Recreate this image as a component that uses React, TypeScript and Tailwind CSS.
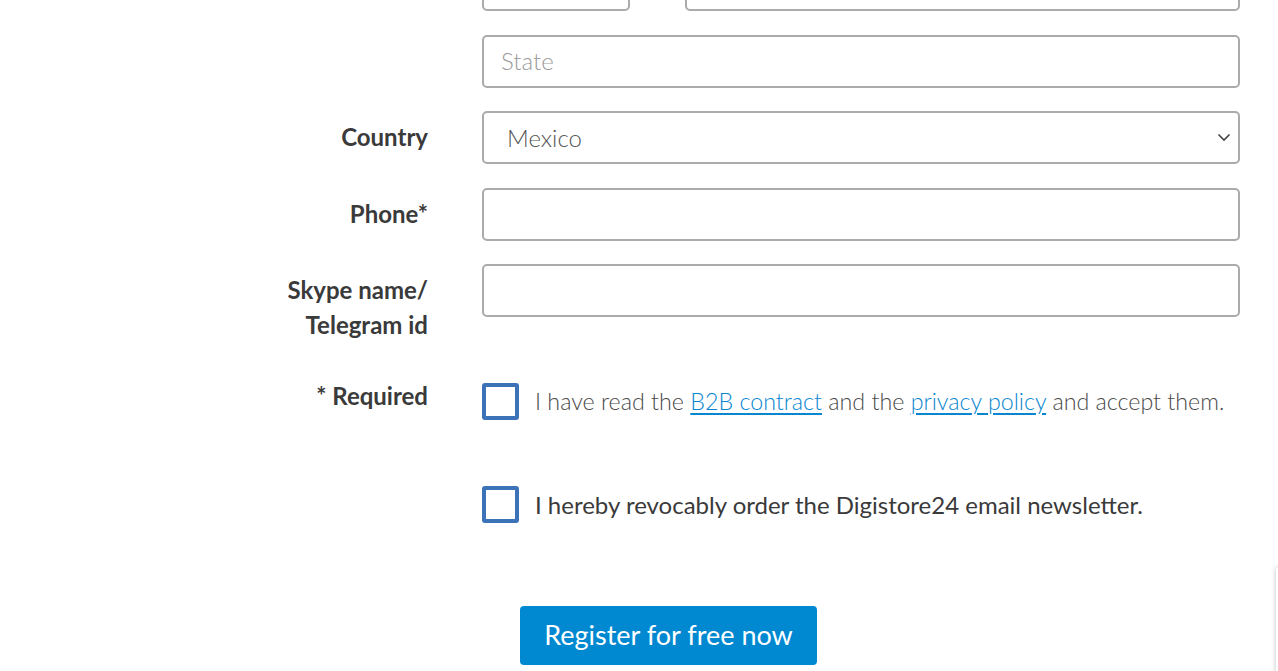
import React from "react";

const labelCls =
  "text-right font-bold text-[24px] leading-[35px] pt-[8px] text-[#3a3a3a]";
const inputCls =
  "h-[53px] w-full rounded-[5px] border-2 border-[#ababab] bg-white";

function Row({ label, children }: { label?: React.ReactNode; children: React.ReactNode }) {
  return (
    <div className="grid grid-cols-[428px_758px] gap-x-[54px]">
      <div className={labelCls}>{label}</div>
      <div>{children}</div>
    </div>
  );
}

export default function App() {
  return (
    <div
      className="relative w-[1278px] h-[671px] overflow-hidden bg-white"
      style={{ fontFamily: "Lato, 'Open Sans', sans-serif" }}
    >
      <div className="mt-[-42px] flex flex-col gap-y-[23.5px]">
        <Row>
          <div className="flex gap-x-[55px]">
            <div className={`${inputCls} !w-[148px] shrink-0`} />
            <div className={`${inputCls} flex-1`} />
          </div>
        </Row>
        <Row>
          <div className={`${inputCls} flex items-center pl-[17px] text-[24px] font-light text-[#9a9a9a]`}>
            State
          </div>
        </Row>
        <Row label="Country">
          <div className={`${inputCls} flex items-center justify-between pl-[23px] pr-[6px] text-[24px] font-light text-[#555]`}>
            <span>Mexico</span>
            <svg width="14" height="9" viewBox="0 0 14 9" className="mr-[1px]">
              <path d="M1.5 1.5 L7 7 L12.5 1.5" fill="none" stroke="#444" strokeWidth="1.6" />
            </svg>
          </div>
        </Row>
        <Row label="Phone*">
          <div className={inputCls} />
        </Row>
        <Row
          label={
            <>
              Skype name/
              <br />
              Telegram id
            </>
          }
        >
          <div className={inputCls} />
        </Row>
      </div>

      <div className="mt-[38px] grid grid-cols-[428px_758px] gap-x-[54px]">
        <div className={`${labelCls} !pt-0 mt-[-2px]`}>* Required</div>
        <div className="flex items-center gap-x-[16px] pt-[3px]">
          <div className="w-[37px] h-[37px] rounded-[3px] border-[4px] border-[#3b72b8] bg-white shrink-0" />
          <div className="text-[23.25px] font-light text-[#4a4a4a] whitespace-nowrap leading-[35px]">
            I have read the{" "}
            <a className="text-[#0a86d0] underline underline-offset-[3px] decoration-[1.5px]">B2B contract</a> and the{" "}
            <a className="text-[#0a86d0] underline underline-offset-[3px] decoration-[1.5px]">privacy policy</a> and accept them.
          </div>
        </div>
      </div>

      <div className="mt-[66px] grid grid-cols-[428px_758px] gap-x-[54px]">
        <div />
        <div className="flex items-center gap-x-[16px]">
          <div className="w-[37px] h-[37px] rounded-[3px] border-[4px] border-[#3b72b8] bg-white shrink-0" />
          <div className="text-[24px] font-normal text-[#3a3a3a] whitespace-nowrap leading-[35px]">
            I hereby revocably order the Digistore24 email newsletter.
          </div>
        </div>
      </div>

      <div className="mt-[83px] pl-[520px]">
        <button className="h-[59px] w-[297px] rounded-[4px] bg-[#0088d1] text-white text-[27px] font-normal">
          Register for free now
        </button>
      </div>

      <div className="absolute left-[1276px] top-[568px] w-[100px] h-[200px] bg-white shadow-[0_0_5px_rgba(0,0,0,0.25)]" />
    </div>
  );
}
